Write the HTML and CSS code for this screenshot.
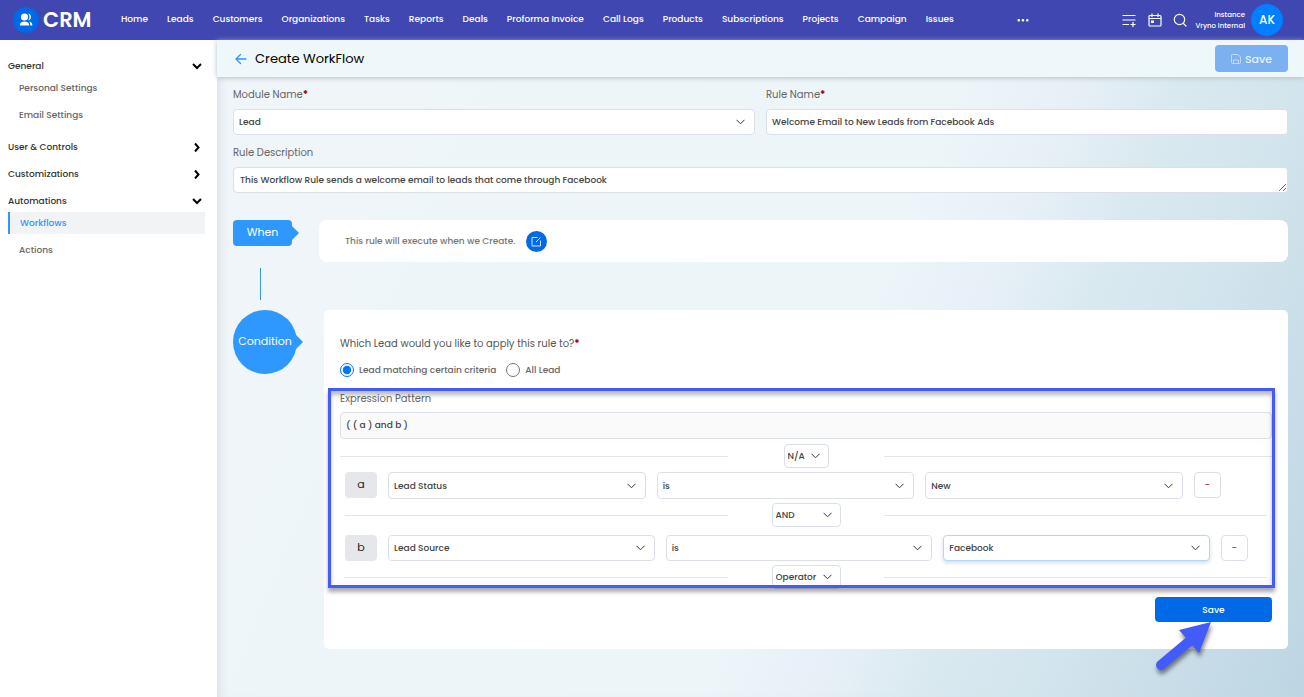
FILE: index.html
```
<!DOCTYPE html>
<html lang="en">
<head>
<meta charset="utf-8">
<meta name="viewport" content="width=device-width, initial-scale=1">
<title>Create WorkFlow</title>
<link rel="stylesheet" href="styles.css">
</head>
<body>
<header class="topbar">
  <a class="brand" href="#">
    <svg class="brand-mark" viewBox="0 0 26 26" aria-hidden="true"><circle cx="13" cy="13" r="13" fill="#0069e8"/><g fill="#fff"><circle cx="11.500" cy="10" r="3.600"/><path d="M15.200 6.500a3.600 3.600 0 0 1 0 7c1.700-2 1.700-5 0-7z"/><path d="M6.800 18.500c0-2.500 1.600-4 4.700-4s4.700 1.500 4.700 4z"/><path d="M16.200 14.600c2 .4 3.200 1.700 3.200 3.900h-2.100c0-1.700-.3-2.900-1.100-3.900z"/></g></svg>
    <span>CRM</span>
  </a>
  <nav class="main-nav">
    <a href="#">Home</a><a href="#">Leads</a><a href="#">Customers</a><a href="#">Organizations</a><a href="#">Tasks</a><a href="#">Reports</a><a href="#">Deals</a><a href="#">Proforma Invoice</a><a href="#">Call Logs</a><a href="#">Products</a><a href="#">Subscriptions</a><a href="#">Projects</a><a href="#">Campaign</a><a href="#">Issues</a>
  </nav>
  <button class="icon-btn more" aria-label="More"><svg width="12" height="4" viewBox="0 0 12 4" fill="#fff"><rect x="0.500" y="1" width="2.500" height="2.500" rx="1"/><rect x="4.700" y="1" width="2.500" height="2.500" rx="1"/><rect x="9" y="1" width="2.500" height="2.500" rx="1"/></svg></button>
  <div class="tools">
    <button class="icon-btn" aria-label="Add to list"><svg width="16" height="16" viewBox="0 0 16 16" fill="none" stroke="#fff" stroke-width="1.200"><path d="M1.500 3.500h13M1.500 8h13M1.500 12.500h6.500M12 10v5M9.500 12.500h5"/></svg></button>
    <button class="icon-btn" aria-label="Calendar"><svg width="14" height="14" viewBox="0 0 14 14" fill="none" stroke="#fff" stroke-width="1.200"><rect x="1" y="2.500" width="12" height="10.500" rx="1"/><path d="M1 5.500h12M4 .5v3.500M10 .5v3.500"/><rect x="3" y="7.500" width="3" height="2.500" fill="#fff" stroke="none"/></svg></button>
    <button class="icon-btn" aria-label="Search"><svg width="14" height="14" viewBox="0 0 14 14" fill="none" stroke="#fff" stroke-width="1.200" stroke-linecap="round"><circle cx="6.500" cy="6.500" r="5.200"/><path d="M10.300 10.300l2.700 2.700"/></svg></button>
  </div>
  <div class="instance"><span>Instance</span><span>Vryno Internal</span></div>
  <button class="avatar">AK</button>
</header>

<div class="shell">
  <aside class="sidebar">
    <button class="group">General<svg viewBox="0 0 10 10"><path d="M1 3l4 4 4-4"/></svg></button>
    <div class="sub"><a href="#">Personal Settings</a><a href="#">Email Settings</a></div>
    <button class="group">User &amp; Controls<svg viewBox="0 0 10 10"><path d="M3 1.500l3.500 4L3 9.500"/></svg></button>
    <button class="group">Customizations<svg viewBox="0 0 10 10"><path d="M3 1.500l3.500 4L3 9.500"/></svg></button>
    <button class="group">Automations<svg viewBox="0 0 10 10"><path d="M1 3l4 4 4-4"/></svg></button>
    <div class="sub"><a class="current" href="#">Workflows</a><a href="#">Actions</a></div>
  </aside>

  <main class="content">
    <div class="page-head">
      <button class="icon-btn" aria-label="Back"><svg width="12" height="12" viewBox="0 0 12 12" fill="none" stroke="#2f98ff" stroke-width="1.300" stroke-linecap="round" stroke-linejoin="round"><path d="M11 6H1.200M5.500 1.500L1 6l4.500 4.500"/></svg></button>
      <h1>Create WorkFlow</h1>
      <button class="head-save"><svg width="10" height="10" viewBox="0 0 10 10" fill="none" stroke="#c4dcfa"><path d="M.5 1.500a1 1 0 0 1 1-1h5.500l2.500 2.500v5.500a1 1 0 0 1-1 1h-7a1 1 0 0 1-1-1zM2.500 9.500V6h5v3.500"/></svg>Save</button>
    </div>

    <form class="form">
      <div class="fields">
        <div class="field">
          <label for="module">Module Name<b>*</b></label>
          <select id="module" class="control"><option>Lead</option></select>
        </div>
        <div class="field">
          <label for="rule">Rule Name<b>*</b></label>
          <input id="rule" class="control" type="text" value="Welcome Email to New Leads from Facebook Ads">
        </div>
        <div class="field wide">
          <label for="desc">Rule Description</label>
          <textarea id="desc" class="control" rows="1">This Workflow Rule sends a welcome email to leads that come through Facebook</textarea>
        </div>
      </div>

      <section class="step">
        <div class="rail"><div class="tag">When</div><div class="connector"></div></div>
        <div class="when-card">
          <p>This rule will execute when we Create.</p>
          <button type="button" class="edit" aria-label="Edit"><svg width="11" height="11" viewBox="0 0 11 11" fill="none" stroke="#d5e8ff"><path d="M6.500 1.500h-5.500v8.500h8.500V4.500M5 6l4.500-4.500"/></svg></button>
        </div>
      </section>

      <section class="step condition">
        <div class="rail"><div class="bubble">Condition</div></div>
        <div class="card">
          <p class="question">Which Lead would you like to apply this rule to?<b>*</b></p>
          <div class="radios">
            <label><input type="radio" name="scope" checked>Lead matching certain criteria</label>
            <label><input type="radio" name="scope">All Lead</label>
          </div>

          <div class="builder">
            <label class="pattern-label" for="pattern">Expression Pattern</label>
            <input id="pattern" class="control pattern" type="text" value="( ( a ) and b )" readonly>
            <div class="join first"><select class="control small na" aria-label="Operator"><option>N/A</option></select></div>
            <div class="row row-a">
              <span class="letter">a</span>
              <select class="control" aria-label="Field a"><option>Lead Status</option></select>
              <select class="control" aria-label="Comparison a"><option>is</option></select>
              <select class="control" aria-label="Value a"><option>New</option></select>
              <button type="button" class="remove" aria-label="Remove a">-</button>
            </div>
            <div class="join"><select class="control small" aria-label="Operator"><option>AND</option></select></div>
            <div class="row row-b">
              <span class="letter">b</span>
              <select class="control" aria-label="Field b"><option>Lead Source</option></select>
              <select class="control" aria-label="Comparison b"><option>is</option></select>
              <select class="control focused" aria-label="Value b"><option>Facebook</option></select>
              <button type="button" class="remove" aria-label="Remove b">-</button>
            </div>
            <div class="join last"><select class="control small" aria-label="Operator"><option>Operator</option></select></div>
            <div class="highlight"></div>
          </div>

          <div class="actions">
            <button type="button" class="save">Save</button>
            <svg class="pointer" width="70" height="64" viewBox="0 0 70 64" aria-hidden="true"><path d="M11 49L39 25.500" stroke="#425bfa" stroke-width="10" stroke-linecap="round"/><path d="M61 6L29 14l7 8 6 7 7 8z" fill="#425bfa"/></svg>
          </div>
        </div>
      </section>
    </form>
  </main>
</div>
</body>
</html>
```

FILE: styles.css
```
* { box-sizing: border-box; }

body {
  margin: 0;
  min-height: 100vh;
  display: flex;
  flex-direction: column;
  font-family: Poppins, Inter, "Open Sans", sans-serif;
  font-size: 10px;
  line-height: 16px;
  color: #333;
}

button, input, select, textarea { font: inherit; color: inherit; }
button { border: 0; padding: 0; background: none; cursor: pointer; }
a { color: inherit; text-decoration: none; }
p, h1 { margin: 0; }
b { color: #a00016; }
svg { flex: none; }

/* Top bar */
.topbar {
  display: flex;
  align-items: center;
  height: 40px;
  padding: 0 21px 0 13px;
  background: #4147b1;
  color: #fff;
}
.brand { display: flex; align-items: center; gap: 4px; width: 108px; font-size: 21px; font-weight: 600; }
.brand-mark { width: 26px; height: 26px; }
.main-nav {
  flex: 0 1 833px;
  display: flex;
  justify-content: space-between;
  font-size: 9px;
  font-weight: 500;
  white-space: nowrap;
  padding-bottom: 2px;
}
.icon-btn { display: flex; align-items: center; justify-content: center; }
.more { flex: 1; padding-right: 30px; }
.tools { display: flex; gap: 11px; align-items: center; margin-right: 8px; }
.instance {
  display: flex;
  flex-direction: column;
  align-items: flex-end;
  font-size: 7px;
  font-weight: 500;
  line-height: 11px;
  margin-right: 6px;
  white-space: nowrap;
}
.avatar {
  width: 32px;
  height: 32px;
  border-radius: 50%;
  background: #007fff;
  color: #fff;
  font-size: 12px;
  font-weight: 500;
}

/* Shell */
.shell { flex: 1; display: grid; grid-template-columns: 217px 1fr; }

.sidebar {
  display: flex;
  flex-direction: column;
  padding: 15px 12px 0 8px;
  background: #fff;
  font-size: 9px;
  font-weight: 500;
}
.group {
  display: flex;
  justify-content: space-between;
  align-items: center;
  height: 22px;
  margin-bottom: 5px;
  padding-right: 3px;
  color: #333;
}
.group svg { width: 10px; height: 10px; fill: none; stroke: #000; stroke-width: 2; }
.sub {
  display: flex;
  flex-direction: column;
  gap: 5px;
  margin-top: -5px;
  padding: 0 0 10px;
  color: #666;
}
.sub a { line-height: 22px; padding-left: 11px; }
.sub .current { padding-left: 10px; border-left: 2px solid #2f98ff; background: #f2f3f5; color: #2f98ff; }

/* Content */
.content {
  min-width: 0;
  background: linear-gradient(113deg, #f1f5fa 0%, #eef5f9 25%, #ecf5f8 56%, #e7f0f7 64%, #d9e9f0 72%, #d2e4ed 81%, #bdd5e3 100%);
  box-shadow: inset 8px 0 10px -6px #d5dde3;
}
.page-head {
  display: flex;
  align-items: center;
  height: 37px;
  padding: 0 16px 0 18px;
  background: #eef7fa;
  box-shadow: 0 1px 5px #b5bfc5;
}
.page-head h1 { flex: 1; margin-left: 8px; font-size: 13px; font-weight: 400; color: #000; }
.head-save {
  display: flex;
  align-items: center;
  justify-content: center;
  gap: 4px;
  width: 73px;
  height: 27px;
  border-radius: 4px;
  background: #7bb0f1;
  color: #e6f1ff;
  font-size: 11px;
  font-weight: 500;
}

.form { padding: 10px 16px 48px; }
.fields { display: grid; grid-template-columns: 1fr 1fr; gap: 10px 11px; }
.field { display: flex; flex-direction: column; gap: 6px; min-width: 0; color: #666; }
.wide { grid-column: 1 / -1; }

.control {
  display: block;
  width: 100%;
  min-width: 0;
  height: 26px;
  margin: 0;
  padding: 0 5px;
  border: 1px solid #dbe0e8;
  border-radius: 4px;
  background-color: #fff;
  color: #444;
  font-size: 9px;
  font-weight: 500;
  outline: 0;
}
select.control {
  appearance: none;
  background-image: url("data:image/svg+xml,%3Csvg xmlns='http://www.w3.org/2000/svg' width='9' height='6' viewBox='0 0 9 6' fill='none' stroke='%23333'%3E%3Cpath d='M.5 .8l4 4 4-4'/%3E%3C/svg%3E");
  background-repeat: no-repeat;
  background-position: right 9px center;
}
textarea.control { padding: 4px 6px; overflow: hidden; resize: vertical; }

/* Steps */
.step { display: grid; grid-template-columns: 86px 1fr; margin-top: 27px; }
.rail { display: flex; flex-direction: column; align-items: flex-start; color: #fff; font-size: 11px; }
.tag {
  position: relative;
  width: 59px;
  height: 26px;
  border-radius: 4px;
  background: #2f98ff;
  text-align: center;
  line-height: 24px;
}
.tag::after, .bubble::after {
  content: "";
  position: absolute;
  left: 100%;
  top: 50%;
  margin-top: -7px;
  border: 7px solid transparent;
  border-left-color: #2f98ff;
  border-right: 0;
}
.connector { width: 1px; height: 32px; margin: 22px 0 0 27px; background: #3a93ec; }
.when-card {
  display: flex;
  align-items: center;
  gap: 11px;
  height: 42px;
  padding: 0 26px;
  border-radius: 8px;
  background: #fff;
  color: #777;
  font-size: 9px;
  font-weight: 500;
}
.edit {
  display: flex;
  align-items: center;
  justify-content: center;
  width: 21px;
  height: 21px;
  border-radius: 50%;
  background: #0069e8;
}

.condition { grid-template-columns: 91px 1fr; margin-top: 10px; }
.bubble {
  position: relative;
  width: 64px;
  height: 64px;
  border-radius: 50%;
  background: #2f98ff;
  text-align: center;
  line-height: 62px;
}
.bubble::after { margin-left: -1px; }
.card { min-width: 0; padding: 26px 16px 27px; border-radius: 5px; background: #fff; color: #555; }
.radios { display: flex; gap: 10px; margin-top: 8px; color: #666; font-size: 9px; font-weight: 500; }
.radios label { display: flex; align-items: center; gap: 5px; height: 20px; }
.radios input { width: 14px; height: 14px; margin: 0; accent-color: #0075ff; }

.builder { position: relative; margin-top: 10px; }
.pattern-label { display: block; padding-top: 1px; margin-bottom: 5px; color: #666; }
.pattern { height: 27px; background-color: #fafafa; }

.join {
  display: grid;
  grid-template-columns: 1fr 156px 1fr;
  align-items: center;
  justify-items: center;
  margin: 4px 5px 8px;
}
.join::before, .join::after { content: ""; width: 100%; height: 1px; background: #e2e5e9; }
.first { margin: 5px 0 4px; }
.last { margin: 4px 5px 0; }
.join .small { width: 69px; height: 24px; padding: 0 3px; background-position: right 8px center; }
.join .na { width: 45px; }

.row { display: grid; grid-template-columns: 32px 1fr 1fr 1fr 27px; gap: 11px; padding-left: 5px; }
.row-a { padding-right: 51px; }
.row-a .control { height: 27px; }
.row-b { padding-right: 24px; }
.letter { height: 26px; border-radius: 4px; background: #e5e7eb; color: #222; font-size: 11px; line-height: 25px; text-align: center; }
.remove { height: 26px; border: 1px solid #dbe0e8; border-radius: 4px; color: #a33a45; line-height: 22px; }
.control.focused { border-color: #b5d6fb; box-shadow: 0 2px 4px #d5dde6; }

.highlight {
  position: absolute;
  inset: -2px -3px 1px -12px;
  border: 3px solid #425bfa;
  box-shadow: 0 4px 4px #0005, inset 0 4px 4px #0004;
  pointer-events: none;
}

.actions { position: relative; display: flex; justify-content: flex-end; margin-top: 8px; }
.save { width: 117px; height: 25px; border-radius: 4px; background: #0069e8; color: #fff; font-size: 9px; font-weight: 500; }
.pointer { position: absolute; right: 52px; top: 19px; filter: drop-shadow(1px 4px 2px #0007); }
```
